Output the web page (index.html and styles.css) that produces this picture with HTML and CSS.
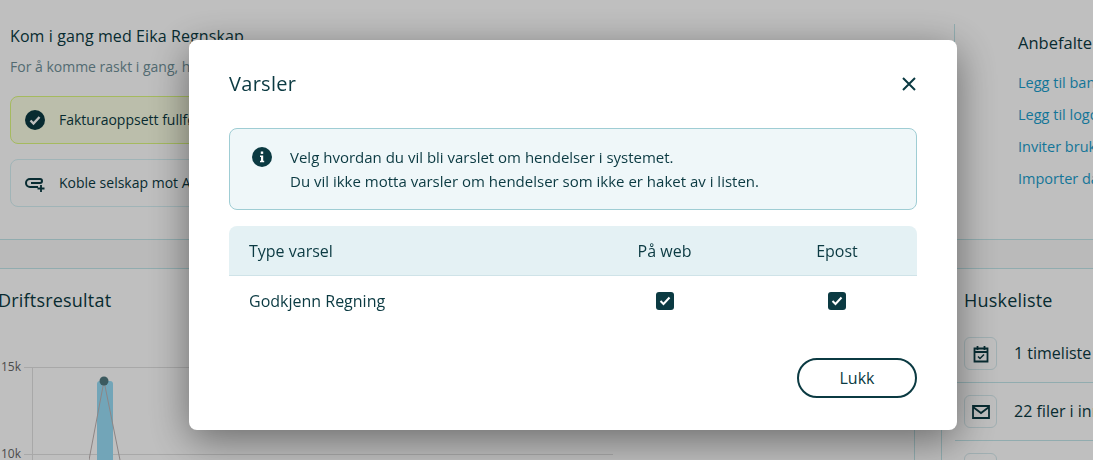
FILE: index.html
```html
<!DOCTYPE html>
<html lang="no">
<head>
  <meta charset="UTF-8" />
  <title>Varsler</title>
  <link rel="stylesheet" href="styles.css">
</head>
<body>
  <div class="page">
    <section class="top">
      <div class="start">
        <h3>Kom i gang med Eika Regnskap</h3>
        <p class="lead">For å komme raskt i gang, har vi laget en liste over oppgaver</p>
        <div class="task done">
          <svg class="task-icon" width="20" height="20" viewBox="0 0 20 20"><circle cx="10" cy="10" r="10" fill="#0b3a42"/><path d="M5.5 10.5l3 3 6-6.500" fill="none" stroke="#fff" stroke-width="2.400"/></svg>
          <span>Fakturaoppsett fullført</span>
        </div>
        <div class="task">
          <svg class="task-icon" width="20" height="20" viewBox="0 0 20 20"><path d="M13 14H5a4 4 0 0 1 0-8h10a2 2 0 0 1 0 4H6" fill="none" stroke="#0b3a42" stroke-width="2"/><path d="M16 12v7M12.500 15.500h7" stroke="#0b3a42" stroke-width="1.800"/></svg>
          <span>Koble selskap mot Altinn</span>
        </div>
      </div>
      <div class="recommended">
        <h3>Anbefalte oppgaver</h3>
        <a>Legg til bankkonto</a>
        <a>Legg til logo</a>
        <a>Inviter brukere</a>
        <a>Importer data</a>
      </div>
    </section>

    <section class="bottom">
      <div class="result">
        <h2>Driftsresultat</h2>
        <div class="chart">
          <div class="tick"><span>15k</span></div>
          <div class="tick"><span>10k</span></div>
          <div class="axis"></div>
          <div class="bar"></div>
          <svg class="line" width="32" height="90" viewBox="0 0 32 90"><path d="M0 84L15 5 31 84" fill="none" stroke="#bcb2b2"/><circle cx="15" cy="5" r="4.500" fill="#50787f"/></svg>
        </div>
      </div>
      <div class="todo">
        <h2>Huskeliste</h2>
        <div class="todo-row">
          <div class="todo-icon">
            <svg width="18" height="18" viewBox="0 0 18 18"><path d="M2.500 3.500h13v13h-13zM2.500 7h13M5.500 1v4M12.500 1v4" fill="none" stroke="#0b3a42" stroke-width="1.800"/><path d="M6 11.500l2 2 4-4" fill="none" stroke="#0b3a42" stroke-width="1.500"/></svg>
          </div>
          <span>1 timeliste til godkjenning</span>
        </div>
        <div class="todo-row">
          <div class="todo-icon">
            <svg width="18" height="14" viewBox="0 0 18 14"><path d="M1 1h16v12H1zM1 2l8 6 8-6" fill="none" stroke="#0b3a42" stroke-width="1.800"/></svg>
          </div>
          <span>22 filer i innboksen</span>
        </div>
        <div class="todo-row">
          <div class="todo-icon"></div>
        </div>
      </div>
    </section>
  </div>

  <div class="overlay">
    <div class="modal">
      <div class="modal-head">
        <h1>Varsler</h1>
        <svg class="close" width="14" height="14" viewBox="0 0 14 14"><path d="M1 1l12 12M13 1L1 13" stroke="#0b3a42" stroke-width="2"/></svg>
      </div>
      <div class="info">
        <svg class="info-icon" width="20" height="20" viewBox="0 0 20 20"><circle cx="10" cy="10" r="10" fill="#0b3a42"/><rect x="8.800" y="4.500" width="2.400" height="2.400" fill="#fff"/><path d="M8 8.500h3.200v5.300H12.200v1.400H8v-1.400h1V9.900H8z" fill="#fff"/></svg>
        <p>Velg hvordan du vil bli varslet om hendelser i systemet.<br>Du vil ikke motta varsler om hendelser som ikke er haket av i listen.</p>
      </div>
      <table class="alerts">
        <thead>
          <tr><th>Type varsel</th><th class="col">På web</th><th class="col">Epost</th></tr>
        </thead>
        <tbody>
          <tr>
            <td>Godkjenn Regning</td>
            <td class="col"><span class="check"><svg width="12" height="10" viewBox="0 0 12 10"><path d="M1.500 5l3 3 6-6.500" fill="none" stroke="#fff" stroke-width="2"/></svg></span></td>
            <td class="col"><span class="check"><svg width="12" height="10" viewBox="0 0 12 10"><path d="M1.500 5l3 3 6-6.500" fill="none" stroke="#fff" stroke-width="2"/></svg></span></td>
          </tr>
        </tbody>
      </table>
      <div class="modal-foot">
        <button>Lukk</button>
      </div>
    </div>
  </div>
</body>
</html>
```

FILE: styles.css
```css
* {
  box-sizing: border-box;
}
html, body {
  height: 100%;
}
body {
  margin: 0;
  overflow: hidden;
  font-family: "Open Sans", sans-serif;
  color: #0b3a42;
  background: #f8f8f8;
}
h1, h2, h3, p {
  margin: 0;
  font-weight: 400;
}

/* page behind the dialog */
.page {
  height: 460px;
  overflow: hidden;
}
.top {
  display: flex;
  height: 240px;
  padding-top: 24px;
  background: #fff;
  border-bottom: 1px solid #c2e6ea;
}
.start {
  flex: none;
  width: 955px;
  padding-left: 10px;
  border-right: 1px solid #c2e6ea;
}
.start h3 {
  margin-top: 1px;
  font-size: 16px;
  line-height: 22px;
  letter-spacing: 0.1px;
}
.lead {
  margin-top: 10px;
  margin-bottom: 19px;
  font-size: 14px;
  line-height: 20px;
  color: #6f8f98;
}
.task {
  display: flex;
  align-items: center;
  gap: 14px;
  width: 400px;
  height: 48px;
  margin-bottom: 15px;
  padding: 0 0 1px 14px;
  font-size: 14px;
  border: 1px solid #d6f0f4;
  border-radius: 8px;
}
.task.done {
  background: #fafee4;
  border-color: #dcf97f;
}
.task-icon {
  flex: none;
}
.recommended {
  padding-left: 63px;
  white-space: nowrap;
}
.recommended h3 {
  margin-top: 8px;
  margin-bottom: 18px;
  font-size: 16.5px;
  line-height: 22px;
}
.recommended a {
  display: block;
  margin-bottom: 10px;
  font-size: 14.5px;
  line-height: 22px;
  color: #1a9dcc;
}

.bottom {
  display: flex;
  height: 192px;
  margin-top: 28px;
  background: #fff;
  border-top: 1px solid #c2e6ea;
}
.result {
  flex: none;
  width: 915px;
  padding-top: 18px;
  border-right: 1px solid #c2e6ea;
}
h2 {
  font-size: 18px;
  line-height: 26px;
  letter-spacing: 0.2px;
}
.result h2 {
  margin-left: -2px;
}
.chart {
  position: relative;
  margin-top: 54px;
}
.tick {
  width: 589px;
  height: 87px;
  margin-left: 24px;
  border-top: 1px solid #e0e0e0;
}
.tick span {
  display: block;
  width: 22px;
  margin: -10px 0 0 -23px;
  font-size: 12px;
  line-height: 18px;
  color: #666;
}
.axis {
  position: absolute;
  left: 32px;
  top: 0;
  bottom: 0;
  width: 1px;
  background: #e0e0e0;
}
.bar {
  position: absolute;
  left: 97px;
  top: 14px;
  width: 16px;
  height: 120px;
  border-radius: 3px 3px 0 0;
  background: #98dcf6;
}
.line {
  position: absolute;
  left: 89px;
  top: 9px;
}
.todo {
  flex: 1;
  margin-left: 26px;
  padding-top: 18px;
  padding-left: 23px;
  border-left: 1px solid #c2e6ea;
}
.todo h2 {
  margin-bottom: 12px;
  margin-left: -1px;
}
.todo-row {
  display: flex;
  gap: 17px;
  height: 58px;
  margin-left: -10px;
  padding: 12px 0 0 9px;
  border-bottom: 1px solid #c2e6ea;
  font-size: 16px;
  line-height: 33px;
  white-space: nowrap;
}
.todo-icon {
  display: flex;
  align-items: center;
  justify-content: center;
  flex: none;
  width: 33px;
  height: 33px;
  border: 1px solid #d6eaee;
  border-radius: 6px;
}

/* dialog */
.overlay {
  position: fixed;
  inset: 0;
  padding: 40px 0 0 189px;
  background: rgba(0, 0, 0, 0.25);
}
.modal {
  width: 768px;
  height: 390px;
  padding: 24px 40px 0;
  background: #fff;
  border-radius: 8px;
  box-shadow: 0 10px 40px rgba(0, 0, 0, 0.45);
}
.modal-head {
  display: flex;
  align-items: center;
  justify-content: space-between;
  height: 40px;
  margin-bottom: 24px;
  padding-right: 1px;
}
.modal-head h1 {
  font-size: 20px;
  line-height: 40px;
  letter-spacing: 0.3px;
}
.info {
  display: flex;
  gap: 18px;
  height: 82px;
  padding: 16px 22px;
  font-size: 15px;
  line-height: 24px;
  background: #eff7f9;
  border: 1px solid #9fcdd4;
  border-radius: 8px;
}
.info-icon {
  flex: none;
  margin-top: 2px;
}
.alerts {
  width: 100%;
  margin-top: 16px;
  border-collapse: separate;
  border-spacing: 0;
  font-size: 16px;
}
.alerts th {
  height: 50px;
  padding: 0 0 0 20px;
  font-weight: 500;
  text-align: left;
  background: #e4f1f4;
  border-bottom: 1px solid #cfe3e8;
}
.alerts th:first-child {
  border-top-left-radius: 8px;
}
.alerts th:last-child {
  border-top-right-radius: 8px;
}
.alerts td {
  height: 50px;
  padding: 0 0 0 20px;
}
.alerts .col {
  width: 160px;
  padding: 0;
  text-align: center;
}
.alerts .col:nth-child(2) {
  width: 185px;
}
.check {
  display: flex;
  align-items: center;
  justify-content: center;
  width: 18px;
  height: 18px;
  margin: 0 auto;
  background: #0b3a42;
  border-radius: 3px;
}
.modal-foot {
  display: flex;
  justify-content: flex-end;
  margin-top: 32px;
}
button {
  width: 120px;
  height: 40px;
  font-family: inherit;
  font-size: 16px;
  color: #0b3a42;
  background: #fff;
  border: 2px solid #0b3a42;
  border-radius: 20px;
}
```
